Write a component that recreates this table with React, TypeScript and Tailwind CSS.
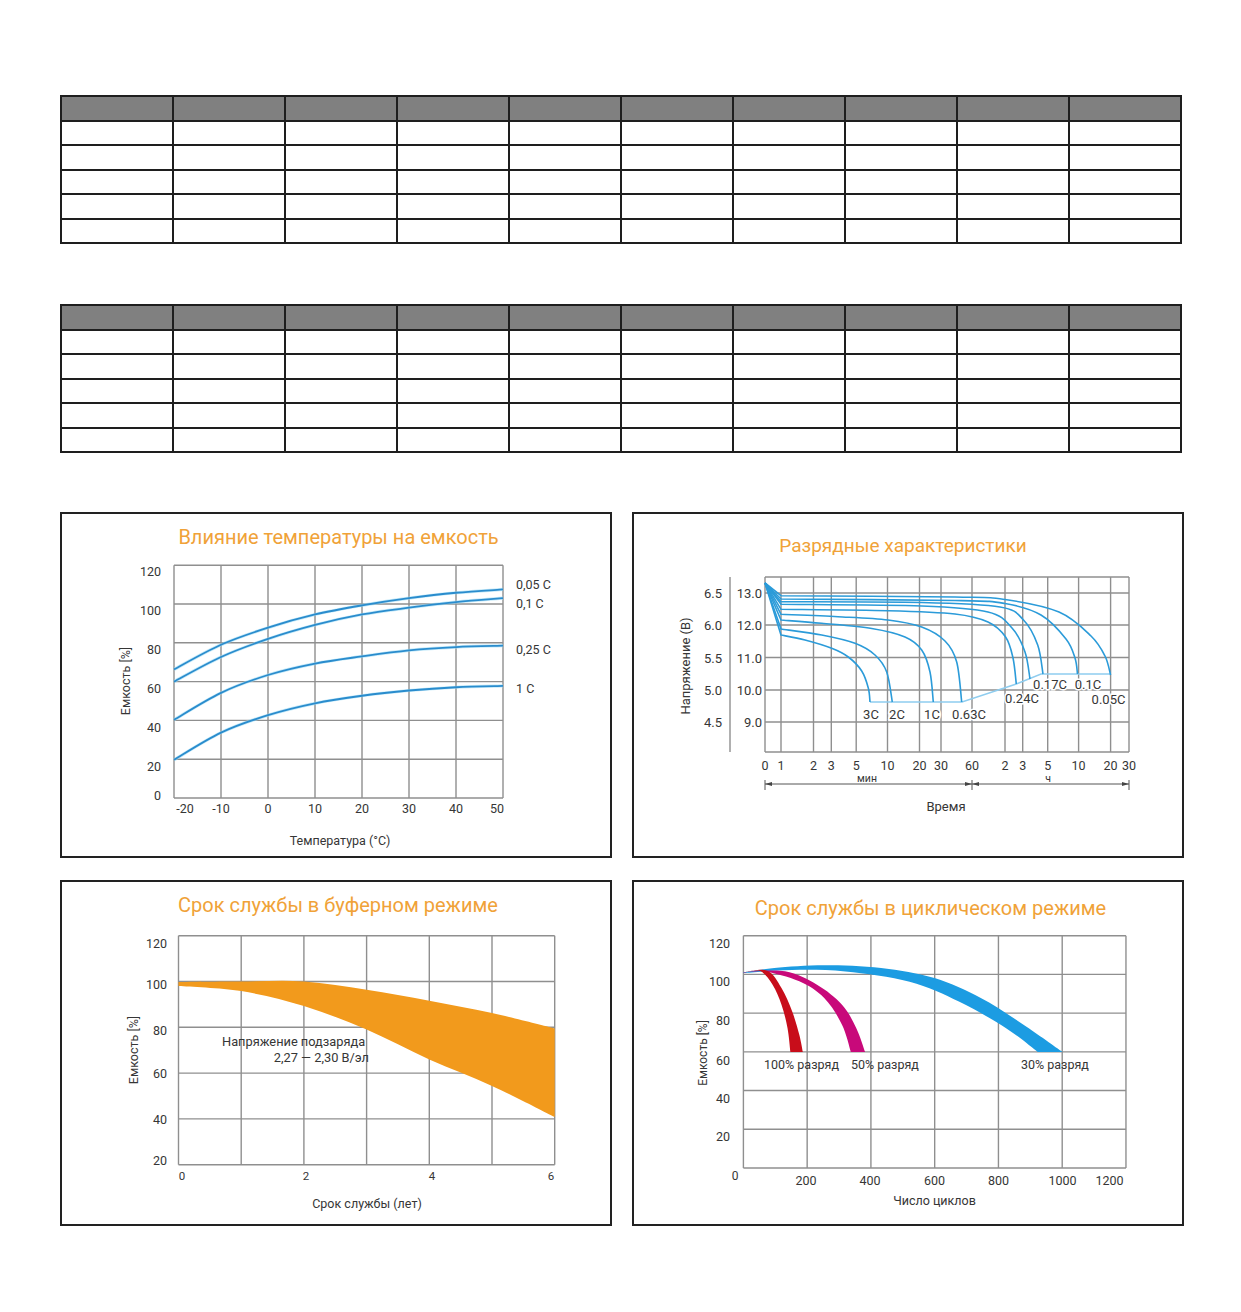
import React from "react";

type P = [number, number];

function tail(pts: P[]): string {
  let d = "";
  for (let i = 0; i < pts.length - 1; i++) {
    const p0 = pts[i - 1] || pts[i];
    const p1 = pts[i];
    const p2 = pts[i + 1];
    const p3 = pts[i + 2] || p2;
    const c1: P = [p1[0] + (p2[0] - p0[0]) / 6, p1[1] + (p2[1] - p0[1]) / 6];
    const c2: P = [p2[0] - (p3[0] - p1[0]) / 6, p2[1] - (p3[1] - p1[1]) / 6];
    d += ` C${c1[0].toFixed(2)},${c1[1].toFixed(2)} ${c2[0].toFixed(2)},${c2[1].toFixed(2)} ${p2[0].toFixed(2)},${p2[1].toFixed(2)}`;
  }
  return d;
}
function smooth(pts: P[]): string {
  return `M${pts[0][0]},${pts[0][1]}` + tail(pts);
}
function band(top: P[], bottom: P[]): string {
  const b = [...bottom].reverse();
  return smooth(top) + ` L${b[0][0]},${b[0][1]}` + tail(b) + " Z";
}

const TXT = "#363636";
const GRID = "#8f8f8f";

function T({
  x,
  y,
  children,
  anchor = "middle",
  size = 12,
  rotate = false,
  halo = false,
}: {
  x: number;
  y: number;
  children: React.ReactNode;
  anchor?: "start" | "middle" | "end";
  size?: number;
  rotate?: boolean;
  halo?: boolean;
}) {
  return (
    <text
      x={x}
      y={y}
      textAnchor={anchor}
      dominantBaseline="central"
      fontSize={size}
      fill={TXT}
      stroke={halo ? "#ffffff" : undefined}
      strokeWidth={halo ? 3 : undefined}
      paintOrder={halo ? "stroke" : undefined}
      transform={rotate ? `rotate(-90 ${x} ${y})` : undefined}
    >
      {children}
    </text>
  );
}

function Table() {
  return (
    <div className="w-[1122px] bg-[#1e1e1e] p-[2px] grid grid-cols-10 gap-[2px]">
      {Array.from({ length: 60 }).map((_, i) => (
        <div key={i} className={i < 10 ? "h-[22.5px] bg-[#808080]" : "h-[22.5px] bg-white"} />
      ))}
    </div>
  );
}

function Box({
  title,
  titleCls,
  ix,
  iy,
  th,
  children,
}: {
  title: string;
  titleCls: string;
  ix: number;
  iy: number;
  th: number;
  children: React.ReactNode;
}) {
  return (
    <div className="h-[346px] border-2 border-[#222] bg-white flex flex-col">
      <div className={titleCls}>{title}</div>
      <svg
        width={548}
        height={342 - th}
        viewBox={`${ix} ${iy + th} 548 ${342 - th}`}
        className="block overflow-visible"
      >
        {children}
      </svg>
    </div>
  );
}

/* ---------- Chart 1 ---------- */
const x1 = (t: number) => 268 + 4.7 * t;
const y1 = (v: number) => 798 - 1.94 * v;
const temps = [-20, -10, 0, 10, 20, 30, 40, 50];
const c1data: number[][] = [
  [66.3, 79, 87.8, 94.6, 99.3, 103, 105.8, 107.5],
  [60, 72.7, 82, 89.2, 94.6, 98.1, 101, 103],
  [40.3, 54.2, 63.4, 69.3, 73, 76.1, 77.8, 78.5],
  [19.7, 33.7, 42.7, 48.8, 52.7, 55.4, 57.1, 57.8],
];

function Chart1() {
  return (
    <Box
      title="Влияние температуры на емкость"
      titleCls="h-[46px] leading-[46px] text-center pl-[5px] text-[20px] text-[#f0a238]"
      ix={62}
      iy={514}
      th={46}
    >
      {[0, 20, 40, 60, 80, 100, 120].map((v) => (
        <line key={v} x1={174} x2={503} y1={y1(v)} y2={y1(v)} stroke={GRID} strokeWidth={1.4} />
      ))}
      {temps.map((t) => (
        <line key={t} x1={x1(t)} x2={x1(t)} y1={y1(120)} y2={y1(0)} stroke={GRID} strokeWidth={1.4} />
      ))}
      {c1data.map((vals, i) => {
        const pts = vals.map((v, k) => [x1(temps[k]), y1(v)] as P);
        return (
          <g key={i}>
            <path d={smooth(pts)} fill="none" stroke="#9fdcf5" strokeWidth={3.2} opacity={0.6} />
            <path d={smooth(pts)} fill="none" stroke="#2a8ccd" strokeWidth={1.8} />
          </g>
        );
      })}
      {[
        ["120", 571],
        ["100", 610],
        ["80", 649],
        ["60", 688],
        ["40", 727],
        ["20", 766],
        ["0", 795],
      ].map(([l, y]) => (
        <T key={l} x={161} y={y as number} anchor="end" size={12.5}>
          {l}
        </T>
      ))}
      {[
        ["-20", 185],
        ["-10", 221],
        ["0", 268],
        ["10", 315],
        ["20", 362],
        ["30", 409],
        ["40", 456],
        ["50", 497],
      ].map(([l, x]) => (
        <T key={l} x={x as number} y={808} size={12.5}>
          {l}
        </T>
      ))}
      <T x={516} y={584} anchor="start" size={12.5}>0,05 С</T>
      <T x={516} y={603} anchor="start" size={12.5}>0,1 С</T>
      <T x={516} y={649} anchor="start" size={12.5}>0,25 С</T>
      <T x={516} y={688} anchor="start" size={12.5}>1 С</T>
      <T x={125} y={681} rotate size={12.5}>Емкость [%]</T>
      <T x={340} y={840} size={12.5}>Температура (°С)</T>
    </Box>
  );
}

/* ---------- Chart 2 ---------- */
const xs2 = [765, 781, 813.5, 831.3, 856.2, 887.5, 919.5, 941, 972, 1005, 1022.7, 1047.7, 1078.6, 1110.6, 1129];
const xl2 = ["0", "1", "2", "3", "5", "10", "20", "30", "60", "2", "3", "5", "10", "20", "30"];
const curves2: P[][] = [
  [[781, 595.7], [955, 597], [1005, 599.5], [1059, 612], [1091, 636], [1105, 656], [1110.6, 675]],
  [[781, 599], [955, 600.5], [1005, 603.5], [1041, 615], [1066, 639], [1075, 658], [1077.5, 674]],
  [[781, 601.7], [921.7, 602.5], [1000, 607], [1023.5, 620], [1037.7, 645], [1043, 674]],
  [[781, 604.3], [921.7, 606], [988, 612], [1012, 628], [1025, 652], [1030, 679]],
  [[781, 609.3], [888, 610.7], [955, 614], [988, 622], [1005.6, 637], [1013, 658], [1016.3, 684]],
  [[781, 614.3], [838, 616.7], [888, 620], [921.7, 627], [945, 641], [956.7, 662], [961.7, 702]],
  [[781, 620], [821.7, 623.3], [871.7, 628.5], [905, 637], [921.7, 650], [930, 672], [933.3, 702]],
  [[781, 629], [821.7, 635], [855, 643.3], [875, 655], [886.7, 672], [892.3, 702]],
  [[781, 635], [805, 640], [831.7, 648.3], [848.3, 657], [861.7, 671], [868.3, 688], [870, 702]],
];

function Chart2() {
  return (
    <Box
      title="Разрядные характеристики"
      titleCls="h-[64px] leading-[64px] text-center pr-[10px] text-[19px] text-[#f0a238]"
      ix={634}
      iy={514}
      th={64}
    >
      <line x1={730} x2={730} y1={577} y2={752} stroke={GRID} strokeWidth={1.4} />
      {[577, 593, 625, 657.5, 690, 722, 752].map((y) => (
        <line key={y} x1={765} x2={1129} y1={y} y2={y} stroke={GRID} strokeWidth={1.4} />
      ))}
      {xs2.map((x, i) => (
        <line key={i} x1={x} x2={x} y1={577} y2={752} stroke={GRID} strokeWidth={1.4} />
      ))}
      <polyline
        points="870,702 962,702 1016.3,684 1041,674 1110.6,674"
        fill="none"
        stroke="#8fcdef"
        strokeWidth={1.4}
      />
      {curves2.map((c, i) => (
        <path
          key={i}
          d={`M765,583 L${c[0][0]},${c[0][1]}` + tail(c)}
          fill="none"
          stroke="#2b9bd9"
          strokeWidth={1.6}
        />
      ))}
      {[
        ["6.5", "13.0", 593],
        ["6.0", "12.0", 625],
        ["5.5", "11.0", 658],
        ["5.0", "10.0", 690],
        ["4.5", "9.0", 722],
      ].map(([a, b, y]) => (
        <g key={a as string}>
          <T x={722} y={y as number} anchor="end" size={13}>{a}</T>
          <T x={762} y={y as number} anchor="end" size={13}>{b}</T>
        </g>
      ))}
      {xs2.map((x, i) => (
        <T key={i} x={x} y={765} size={12.5}>{xl2[i]}</T>
      ))}
      <T x={867} y={778.5} size={10.5}>мин</T>
      <T x={1048} y={778.5} size={10.5}>ч</T>
      <line x1={765} x2={1129} y1={784} y2={784} stroke="#555" strokeWidth={1} />
      {[765, 972, 1129].map((x) => (
        <line key={x} x1={x} x2={x} y1={780} y2={790} stroke="#555" strokeWidth={1} />
      ))}
      <polygon points="765,784 772,782 772,786" fill="#444" />
      <polygon points="972,784 965,782 965,786" fill="#444" />
      <polygon points="972,784 979,782 979,786" fill="#444" />
      <polygon points="1129,784 1122,782 1122,786" fill="#444" />
      <T x={946} y={806} size={13}>Время</T>
      <T x={685} y={666} rotate size={13}>Напряжение (В)</T>
      <T x={871} y={714} size={13} halo>3C</T>
      <T x={897} y={714} size={13} halo>2C</T>
      <T x={932} y={714} size={13} halo>1C</T>
      <T x={969} y={714} size={13} halo>0.63C</T>
      <T x={1022} y={698} size={13} halo>0.24C</T>
      <T x={1050} y={684} size={13} halo>0.17C</T>
      <T x={1088} y={684} size={13} halo>0.1C</T>
      <T x={1108.5} y={699} size={13} halo>0.05C</T>
    </Box>
  );
}

/* ---------- Chart 3 ---------- */
const x3 = (t: number) => 178.5 + 62.7 * t;
const y3 = (v: number) => 1164.7 - (v - 20) * 2.29;
const top3: P[] = [
  [0, 99.8],
  [1, 100],
  [2, 100],
  [3, 96.4],
  [4, 91.6],
  [5, 86.2],
  [6, 79.5],
].map(([t, v]) => [x3(t), y3(v)] as P);
const bot3: P[] = [
  [0, 98],
  [1, 95.8],
  [2, 89.3],
  [3, 79],
  [4, 65.9],
  [5, 54.4],
  [6, 40.8],
].map(([t, v]) => [x3(t), y3(v)] as P);

function Chart3() {
  return (
    <Box
      title="Срок службы в буферном режиме"
      titleCls="h-[46px] leading-[46px] text-center pl-[4px] text-[20px] text-[#f0a238]"
      ix={62}
      iy={882}
      th={46}
    >
      {[20, 40, 60, 80, 100, 120].map((v) => (
        <line key={v} x1={x3(0)} x2={x3(6)} y1={y3(v)} y2={y3(v)} stroke={GRID} strokeWidth={1.4} />
      ))}
      {[0, 1, 2, 3, 4, 5, 6].map((t) => (
        <line key={t} x1={x3(t)} x2={x3(t)} y1={y3(120)} y2={y3(20)} stroke={GRID} strokeWidth={1.4} />
      ))}
      <path d={band(top3, bot3)} fill="#f29a1c" />
      {[
        ["120", 943],
        ["100", 984],
        ["80", 1030],
        ["60", 1073],
        ["40", 1119],
        ["20", 1160],
      ].map(([l, y]) => (
        <T key={l} x={167} y={y as number} anchor="end" size={12.5}>{l}</T>
      ))}
      {[
        ["0", 182],
        ["2", 306],
        ["4", 432],
        ["6", 551],
      ].map(([l, x]) => (
        <T key={l} x={x as number} y={1176} size={11.5}>{l}</T>
      ))}
      <T x={222} y={1041} anchor="start" size={12.8}>Напряжение подзаряда</T>
      <T x={369} y={1057} anchor="end" size={12.8}>2,27 — 2,30 В/эл</T>
      <T x={367} y={1203} size={12.5}>Срок службы (лет)</T>
      <T x={133} y={1050} rotate size={12.5}>Емкость [%]</T>
    </Box>
  );
}

/* ---------- Chart 4 ---------- */
const x4 = (n: number) => 743.4 + n * 0.3188;
const y4 = (v: number) => 1168 - v * 1.936;
const redTop: P[] = [[743.4, 972.5], [767.2, 970.7], [781.5, 988], [792.1, 1011.3], [799.3, 1034.7], [802.8, 1052]];
const redBot: P[] = [[743.4, 972.5], [760.1, 971], [772.6, 984.7], [781.5, 1004.7], [787.5, 1028], [790.4, 1052]];
const magTop: P[] = [[743.4, 972.3], [785, 971.3], [817, 984.7], [842, 1004.7], [856.2, 1028], [865.1, 1052]];
const magBot: P[] = [[743.4, 972.5], [763.7, 971.2], [799.3, 981.3], [824.2, 998], [842, 1024.7], [850.9, 1052]];
const bluTop: P[] = [[743.4, 972.3], [774.3, 968], [824.2, 965.3], [881.1, 968], [934.5, 978], [980.8, 998], [1023.5, 1024.7], [1062.6, 1052]];
const bluBot: P[] = [[743.4, 973], [792.1, 970], [845.5, 971.6], [909.6, 981.8], [959.4, 1001.8], [1005.7, 1028], [1037.7, 1052]];

function Chart4() {
  return (
    <Box
      title="Срок службы в циклическом режиме"
      titleCls="h-[52px] leading-[52px] text-center pl-[45px] text-[20px] text-[#f0a238]"
      ix={634}
      iy={882}
      th={52}
    >
      {[0, 20, 40, 60, 80, 100, 120].map((v) => (
        <line key={v} x1={x4(0)} x2={x4(1200)} y1={y4(v)} y2={y4(v)} stroke={GRID} strokeWidth={1.4} />
      ))}
      {[0, 200, 400, 600, 800, 1000, 1200].map((n) => (
        <line key={n} x1={x4(n)} x2={x4(n)} y1={y4(120)} y2={y4(0)} stroke={GRID} strokeWidth={1.4} />
      ))}
      <path d={band(bluTop, bluBot)} fill="#1c9ce2" />
      <path d={band(magTop, magBot)} fill="#c8097a" />
      <path d={band(redTop, redBot)} fill="#c80d1a" />
      {[
        ["120", 943],
        ["100", 981],
        ["80", 1020],
        ["60", 1060],
        ["40", 1098],
        ["20", 1136],
      ].map(([l, y]) => (
        <T key={l} x={730} y={y as number} anchor="end" size={12.5}>{l}</T>
      ))}
      <T x={735} y={1176} size={12}>0</T>
      {[
        ["200", 806],
        ["400", 870],
        ["600", 934.5],
        ["800", 998.5],
        ["1000", 1062.6],
        ["1200", 1109.5],
      ].map(([l, x]) => (
        <T key={l} x={x as number} y={1180} size={12.5}>{l}</T>
      ))}
      <T x={764} y={1064} anchor="start" size={12.5}>100% разряд</T>
      <T x={851} y={1064} anchor="start" size={12.5}>50% разряд</T>
      <T x={1021} y={1064} anchor="start" size={12.5}>30% разряд</T>
      <T x={934.5} y={1200} size={12.5}>Число циклов</T>
      <T x={702.5} y={1053} rotate size={12}>Емкость [%]</T>
    </Box>
  );
}

export default function App() {
  return (
    <div className="w-[1241px] min-h-[1312px] bg-white font-[Roboto,'Noto_Sans',sans-serif]">
      <div className="pt-[95px] pl-[60px]">
        <Table />
        <div className="mt-[60px]">
          <Table />
        </div>
        <div className="mt-[59px] grid grid-cols-[552px_552px] gap-x-[20px] gap-y-[22px]">
          <Chart1 />
          <Chart2 />
          <Chart3 />
          <Chart4 />
        </div>
      </div>
    </div>
  );
}
